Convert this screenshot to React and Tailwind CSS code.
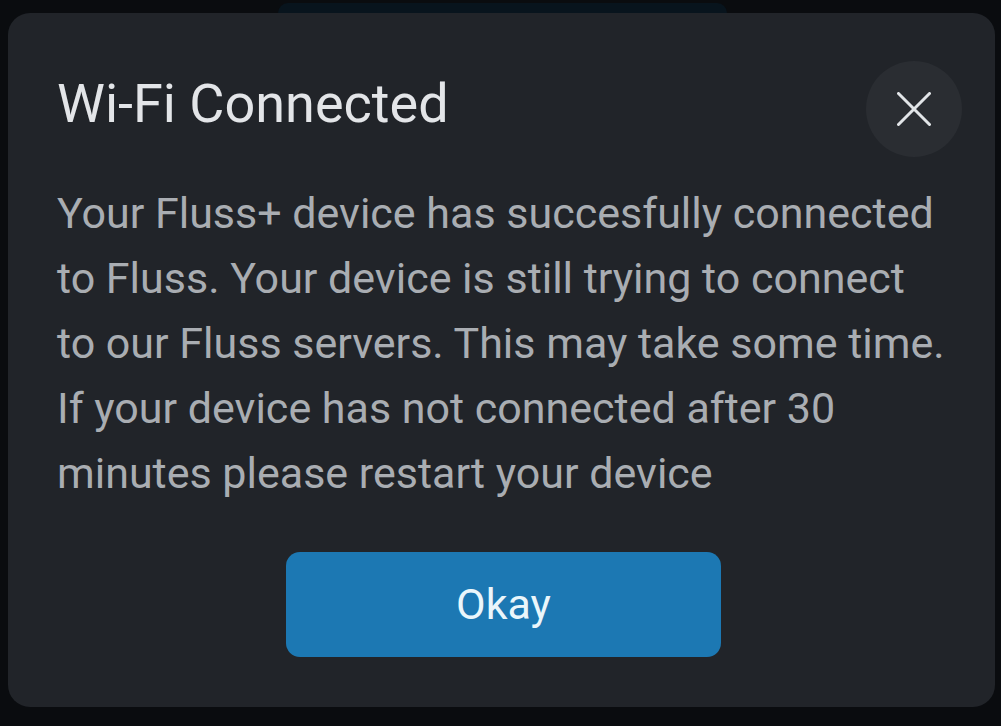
import React from 'react';

const App = () => {
  return (
    <div
      className="w-[1001px] h-[726px] bg-[#0a0c0f] overflow-hidden pt-[3px]"
      style={{ fontFamily: 'Roboto, "Noto Sans", sans-serif' }}
    >
      {/* peeking element behind the sheet */}
      <div className="ml-[278px] w-[449px] h-[10px] rounded-t-[10px] bg-[#08141d]" />

      {/* Dialog */}
      <div className="ml-[8px] w-[987px] h-[694px] bg-[#212429] rounded-[22px] pt-[48px] pl-[49px] pr-[33px]">
        <div className="flex justify-between items-start">
          <h1 className="mt-[11px] text-[54px] leading-[63px] text-[#e3e5e8] font-normal">
            Wi-Fi Connected
          </h1>
          <button className="w-[96px] h-[96px] rounded-full bg-[#2a2d32] flex items-center justify-center">
            <svg width="34" height="34" viewBox="0 0 34 34" fill="none">
              <path d="M1.5 1.5 L32.5 32.5 M32.5 1.5 L1.5 32.5" stroke="#e2e5e8" strokeWidth="3" strokeLinecap="round" />
            </svg>
          </button>
        </div>

        <p className="mt-[24px] w-[893px] text-[43px] leading-[65px] text-[#a9adb2]">
          Your Fluss+ device has succesfully connected to Fluss. Your device is still trying to connect to our Fluss servers. This may take some time. If your device has not connected after 30 minutes please restart your device
        </p>

        <div className="mt-[46px] flex pl-[229px]">
          <button className="w-[435px] h-[105px] rounded-[14px] bg-[#1c78b3] text-[#eaf6fb] text-[43px] flex items-center justify-center">
            Okay
          </button>
        </div>
      </div>
    </div>
  );
};

export default App;
